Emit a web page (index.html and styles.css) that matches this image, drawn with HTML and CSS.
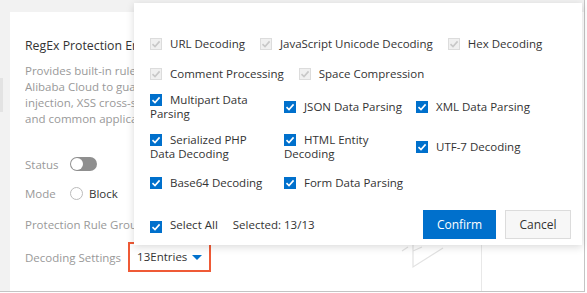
FILE: index.html
```html
<!DOCTYPE html>
<html lang="en">
<head>
    <meta charset="UTF-8">
    <meta name="viewport" content="width=device-width, initial-scale=1.0">
    <title>Decoding Settings</title>
    <link rel="stylesheet" href="styles.css">
</head>
<body>
    <div class="frame">
        <div class="rail">
            <div class="rail-tab"></div>
        </div>
        <div class="card">
            <div class="card-main">
                <h3 class="rule-title clip">RegEx Protection Engine</h3>
                <p class="rule-desc clip">Provides built-in rules provided by<br>Alibaba Cloud to guard against SQL<br>injection, XSS cross-site scripting,<br>and common application attacks.</p>

                <div class="field">
                    <span class="field-label">Status</span>
                    <span class="switch"><span class="knob"></span></span>
                </div>
                <div class="field">
                    <span class="field-label">Mode</span>
                    <span class="radio"></span>
                    <span class="radio-text">Block</span>
                </div>
                <div class="field">
                    <span class="field-label clip">Protection Rule Group</span>
                </div>
                <div class="field">
                    <span class="field-label">Decoding Settings</span>
                    <span class="entries">13Entries <span class="caret"></span></span>
                </div>

                <svg class="shield" width="50" height="26" viewBox="0 0 50 26">
                    <path d="M2 6 L8 2 M13 0 L13 22 L43 3 M13 6 L22 2" fill="none" stroke="#e2e2e2" stroke-width="1.2"/>
                </svg>
            </div>
            <div class="card-side"></div>
        </div>

        <div class="decode-pop">
            <div class="opt-line">
                <label class="opt off"><span class="box"><svg viewBox="0 0 12 12"><path d="M2.5 6.2 L5 8.6 L9.6 3.4"/></svg></span>URL Decoding</label>
                <label class="opt off"><span class="box"><svg viewBox="0 0 12 12"><path d="M2.5 6.2 L5 8.6 L9.6 3.4"/></svg></span>JavaScript Unicode Decoding</label>
                <label class="opt off"><span class="box"><svg viewBox="0 0 12 12"><path d="M2.5 6.2 L5 8.6 L9.6 3.4"/></svg></span>Hex Decoding</label>
            </div>
            <div class="opt-line">
                <label class="opt off"><span class="box"><svg viewBox="0 0 12 12"><path d="M2.5 6.2 L5 8.6 L9.6 3.4"/></svg></span>Comment Processing</label>
                <label class="opt off"><span class="box"><svg viewBox="0 0 12 12"><path d="M2.5 6.2 L5 8.6 L9.6 3.4"/></svg></span>Space Compression</label>
            </div>
            <div class="opt-grid">
                <label class="cell"><span class="box"><svg viewBox="0 0 12 12"><path d="M2.5 6.2 L5 8.6 L9.6 3.4"/></svg></span>Multipart Data Parsing</label>
                <label class="cell"><span class="box"><svg viewBox="0 0 12 12"><path d="M2.5 6.2 L5 8.6 L9.6 3.4"/></svg></span>JSON Data Parsing</label>
                <label class="cell"><span class="box"><svg viewBox="0 0 12 12"><path d="M2.5 6.2 L5 8.6 L9.6 3.4"/></svg></span>XML Data Parsing</label>
                <label class="cell"><span class="box"><svg viewBox="0 0 12 12"><path d="M2.5 6.2 L5 8.6 L9.6 3.4"/></svg></span>Serialized PHP Data Decoding</label>
                <label class="cell"><span class="box"><svg viewBox="0 0 12 12"><path d="M2.5 6.2 L5 8.6 L9.6 3.4"/></svg></span>HTML Entity Decoding</label>
                <label class="cell"><span class="box"><svg viewBox="0 0 12 12"><path d="M2.5 6.2 L5 8.6 L9.6 3.4"/></svg></span>UTF-7 Decoding</label>
                <label class="cell"><span class="box"><svg viewBox="0 0 12 12"><path d="M2.5 6.2 L5 8.6 L9.6 3.4"/></svg></span>Base64 Decoding</label>
                <label class="cell"><span class="box"><svg viewBox="0 0 12 12"><path d="M2.5 6.2 L5 8.6 L9.6 3.4"/></svg></span>Form Data Parsing</label>
            </div>
            <div class="pop-foot">
                <label class="opt select-all"><span class="box"><svg viewBox="0 0 12 12"><path d="M2.5 6.2 L5 8.6 L9.6 3.4"/></svg></span>Select All</label>
                <span class="count">Selected: 13/13</span>
                <span class="spacer"></span>
                <button class="btn btn-primary">Confirm</button>
                <button class="btn">Cancel</button>
            </div>
        </div>
    </div>
</body>
</html>
```

FILE: styles.css
```css
html, body {
    margin: 0;
    padding: 0;
    background-color: #fff;
}

body {
    font-family: "Open Sans", Arial, sans-serif;
    font-size: 11.5px;
    color: #333;
}

.frame {
    position: relative;
    width: 585px;
    height: 292px;
    box-sizing: border-box;
    background-color: #f2f2f2;
    border-right: 1px solid #c4c4c4;
    border-bottom: 1px solid #c4c4c4;
    display: flex;
}

.rail {
    width: 10px;
    flex-shrink: 0;
}

.rail-tab {
    width: 3px;
    height: 34px;
    margin-top: 78px;
    background-color: #e3e3e3;
}

.card {
    flex: 1;
    margin-top: 12px;
    background-color: #fff;
    display: flex;
}

.card-main {
    position: relative;
    width: 472px;
    box-sizing: border-box;
    padding: 25px 0 0 15px;
    border-right: 1px solid #e8e8e8;
}

.card-side {
    flex: 1;
}

/* the popup covers everything right of x=134 */
.clip {
    max-width: 109px;
    overflow: hidden;
}

.rule-title {
    margin: 0;
    font-size: 12.3px;
    font-weight: normal;
    line-height: 18px;
    color: #333;
    white-space: nowrap;
}

.rule-desc {
    margin: 8px 0 0;
    line-height: 16px;
    color: #999;
    white-space: nowrap;
}

.field {
    display: flex;
    align-items: center;
    height: 20px;
    color: #999;
}

.field:nth-of-type(1) { margin-top: 27px; }
.field:nth-of-type(2) { margin-top: 9px; }
.field:nth-of-type(3) { margin-top: 11px; }
.field:nth-of-type(4) { margin-top: 13px; }

.field-label {
    min-width: 45px;
    white-space: nowrap;
}

.switch {
    position: relative;
    width: 27px;
    height: 14px;
    border-radius: 7px;
    background-color: #8f8f8f;
}

.switch .knob {
    position: absolute;
    left: 1px;
    top: 1px;
    width: 12px;
    height: 12px;
    border-radius: 50%;
    background-color: #fff;
}

.radio {
    width: 11px;
    height: 11px;
    border: 1px solid #bbb;
    border-radius: 50%;
    background-color: #fff;
}

.radio-text {
    margin-left: 6px;
    color: #333;
}

.entries {
    margin-left: 7px;
    padding: 4px 7px 4px 7px;
    border: 2px solid #ef5a36;
    color: #333;
    line-height: 18px;
    display: flex;
    align-items: center;
}

.caret {
    display: inline-block;
    margin-left: 5px;
    width: 0;
    height: 0;
    border-left: 5px solid transparent;
    border-right: 5px solid transparent;
    border-top: 5px solid #0070cc;
}

.shield {
    position: absolute;
    left: 390px;
    top: 233px;
}

/* decoding popup */
.decode-pop {
    position: absolute;
    left: 134px;
    top: 3px;
    width: 448px;
    height: 242px;
    box-sizing: border-box;
    padding: 33px 11px 0 16px;
    background-color: #fff;
    box-shadow: 0 2px 8px rgba(0, 0, 0, 0.15);
}

.opt-line {
    display: flex;
    height: 16px;
    align-items: center;
    gap: 15px;
    margin-bottom: 14px;
}

.opt {
    display: flex;
    align-items: center;
    white-space: nowrap;
    line-height: 16px;
}

.box {
    display: inline-block;
    width: 12px;
    height: 12px;
    margin-right: 8px;
    background-color: #0070cc;
    vertical-align: -2px;
    flex-shrink: 0;
}

.box svg {
    display: block;
    width: 12px;
    height: 12px;
    fill: none;
    stroke: #fff;
    stroke-width: 1.6;
}

.opt.off .box {
    background-color: #f0f0f0;
    box-shadow: inset 0 0 0 1px #dcdcdc;
}

.opt.off .box svg {
    stroke: #c8c8c8;
}

.opt-grid {
    display: grid;
    grid-template-columns: 122px 120px 1fr;
    column-gap: 12px;
    grid-template-rows: 28px 28px 20px;
    row-gap: 12px;
    align-items: center;
    margin-top: -3px;
}

.cell {
    display: block;
    line-height: 14px;
}

.pop-foot {
    display: flex;
    align-items: center;
    margin-top: 17px;
}

.select-all .box {
    margin-top: 5px;
}

.count {
    margin-left: 15px;
}

.spacer {
    flex: 1;
}

.btn {
    height: 29px;
    padding: 0 12px;
    font-family: inherit;
    font-size: 12px;
    color: #333;
    background-color: #f7f7f7;
    border: 1px solid #dcdcdc;
    cursor: pointer;
    margin-left: 9px;
    min-width: 66px;
}

.btn-primary {
    min-width: 73px;
    color: #fff;
    background-color: #0070cc;
    border-color: #0070cc;
}
```
